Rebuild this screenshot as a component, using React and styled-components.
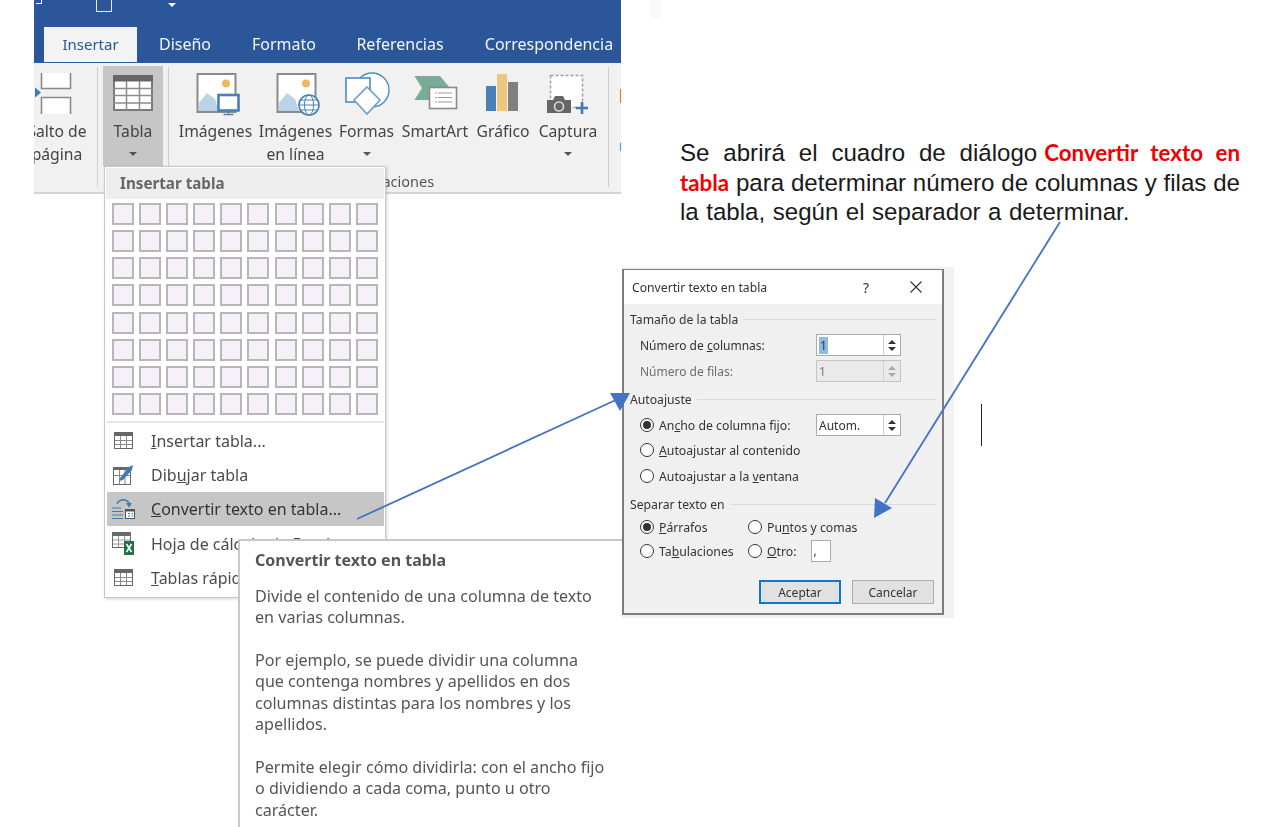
import React from "react";
import styled, { createGlobalStyle } from "styled-components";

const UI_FONT = `"Noto Sans", "Open Sans", sans-serif`;
const BLUE = "#2b579a";

const Global = createGlobalStyle`
  html, body { margin: 0; padding: 0; background: #fff; }
`;

const Canvas = styled.div`
  position: relative;
  width: 1275px;
  height: 827px;
  overflow: hidden;
  background: #fff;
  font-family: ${UI_FONT};
`;

/* ---------- ribbon ---------- */
const Ribbon = styled.div`
  position: absolute;
  left: 34px;
  top: 0;
  width: 587px;
  height: 194px;
  overflow: hidden;
  display: flex;
  flex-direction: column;
  filter: blur(0.35px);
`;

const TitleBar = styled.div`
  height: 62px;
  flex: none;
  background: ${BLUE};
  display: flex;
  flex-direction: column;
`;

const QuickAccess = styled.div`
  height: 27px;
  flex: none;
  display: flex;
  align-items: flex-start;
  padding-left: 2px;
`;

const QuickMark = styled.div`
  width: 5px;
  height: 3px;
  margin-right: 54px;
  border-bottom: 1px solid #fff;
  border-right: 1px solid #fff;
`;

const QuickBox = styled.div`
  width: 14px;
  height: 11px;
  margin-right: 56px;
  border: 1px solid #e8edf5;
  border-top: 0;
`;

const QuickCaret = styled.div`
  width: 0;
  height: 0;
  margin-top: 3px;
  border-left: 4px solid transparent;
  border-right: 4px solid transparent;
  border-top: 4px solid #fff;
`;

const TabRow = styled.div`
  height: 35px;
  flex: none;
  display: flex;
  padding-left: 10px;
`;

const Tab = styled.div`
  width: ${({ $w }) => $w}px;
  flex: none;
  display: flex;
  align-items: center;
  justify-content: center;
  font-size: ${({ $active }) => ($active ? 15 : 16)}px;
  white-space: nowrap;
  padding-bottom: 1px;
  color: ${({ $active }) => ($active ? BLUE : "#f2f5fa")};
  background: ${({ $active }) => ($active ? "#f3f3f3" : "transparent")};
`;

const RibbonBody = styled.div`
  flex: 1;
  display: flex;
  background: #f1f1f1;
  border-bottom: 2px solid #d4d4d4;
  border-top: 1px solid #2f5c9e;
  box-sizing: border-box;
  color: #444;
`;

const Sep = styled.div`
  width: 1px;
  flex: none;
  height: 120px;
  margin: 4px ${({ $mr }) => $mr ?? 5}px 0 ${({ $ml }) => $ml ?? 5}px;
  background: #cfcfcf;
`;

const RibbonButton = styled.div`
  width: ${({ $w }) => $w}px;
  height: 100px;
  margin-top: 3px;
  margin-left: ${({ $ml }) => $ml ?? 0}px;
  flex: none;
  display: flex;
  flex-direction: column;
  align-items: center;
  padding-top: 6px;
  box-sizing: border-box;
  background: ${({ $on }) => ($on ? "#c6c6c6" : "transparent")};
`;

const IconSlot = styled.div`
  width: 46px;
  height: 44px;
  margin-bottom: 3.5px;
  flex: none;
  svg { display: block; overflow: visible; }
`;

const ButtonLine = styled.div`
  height: 23px;
  line-height: 23px;
  font-size: 15.7px;
  white-space: nowrap;
  text-align: center;
  display: flex;
  align-items: center;
  justify-content: center;
`;

const Caret = styled.div`
  width: 0;
  height: 0;
  border-left: 4px solid transparent;
  border-right: 4px solid transparent;
  border-top: 4px solid #555;
`;

const Group = styled.div`
  display: flex;
  flex-direction: column;
`;

const GroupButtons = styled.div`
  display: flex;
  gap: 3px;
  padding-left: 3px;
`;

const GroupCaption = styled.div`
  text-align: center;
  margin-top: 5px;
  font-size: 14.5px;
  line-height: 20px;
  color: #555;
  padding-left: 6px;
`;

const EdgeMarks = styled.div`
  flex: none;
  width: 2px;
  margin-left: 6px;
  display: flex;
  flex-direction: column;
  padding-top: 26px;
  gap: 40px;
`;

const EdgeMark = styled.div`
  height: ${({ $h }) => $h}px;
  background: ${({ $c }) => $c};
`;

/* ---------- insert table menu ---------- */
const Menu = styled.div`
  position: absolute;
  left: 104px;
  top: 166px;
  width: 282px;
  height: 432px;
  box-sizing: border-box;
  background: #fff;
  border: 1px solid #c8c8c8;
  box-shadow: 1px 1px 3px rgba(0, 0, 0, 0.18);
  color: #444;
  filter: blur(0.35px);
`;

const MenuHeader = styled.div`
  height: 31px;
  margin: 1px 1px 0;
  padding-left: 14px;
  padding-bottom: 1px;
  box-sizing: border-box;
  display: flex;
  align-items: center;
  background: #eeeeee;
  font-size: 15.2px;
  font-weight: 700;
  color: #666;
`;

const CellGrid = styled.div`
  display: grid;
  grid-template-columns: repeat(10, 22px);
  grid-auto-rows: 22px;
  column-gap: 5.1px;
  row-gap: 5.14px;
  padding: 4px 0 0 7px;
`;

const Cell = styled.div`
  box-sizing: border-box;
  border: 2px solid #b8b7b8;
  background: #f6f1f8;
`;

const MenuRule = styled.div`
  height: 2px;
  margin: 6px 1px 1px 2px;
  background: #e6e6e6;
`;

const MenuRow = styled.div`
  height: 34.2px;
  margin: 0 1px 0 2px;
  box-sizing: border-box;
  display: flex;
  align-items: center;
  font-size: 16px;
  white-space: nowrap;
  background: ${({ $on }) => ($on ? "#c6c6c6" : "transparent")};
  color: ${({ $on }) => ($on ? "#333" : "#4b4b4b")};
`;

const MenuIcon = styled.div`
  width: 44px;
  flex: none;
  display: flex;
  padding-left: ${({ $pl }) => $pl ?? 5}px;
  box-sizing: border-box;
  svg { display: block; overflow: visible; }
`;

/* ---------- tooltip ---------- */
const Tip = styled.div`
  position: absolute;
  left: 238px;
  top: 539px;
  width: 384px;
  height: 300px;
  box-sizing: border-box;
  padding: 9px 10px 0 15px;
  background: #fff;
  border-left: 2px solid #c8c8c8;
  border-top: 2px solid #c8c8c8;
  color: #555;
  filter: blur(0.35px);
`;

const TipTitle = styled.div`
  font-size: 16px;
  line-height: 20px;
  font-weight: 700;
  margin-bottom: 15.5px;
`;

const TipText = styled.p`
  margin: 0 0 21.5px;
  font-size: 16.1px;
  line-height: 21.4px;
  white-space: nowrap;
`;

/* ---------- dialog ---------- */
const DialogHalo = styled.div`
  position: absolute;
  left: 622px;
  top: 267px;
  width: 332px;
  height: 351px;
  background: #f2f2f2;
`;

const Dialog = styled.div`
  position: absolute;
  left: 622px;
  top: 269px;
  width: 322px;
  height: 346px;
  box-sizing: border-box;
  border: 2px solid #7d7d7d;
  border-top-width: 1px;
  background: #f0f0f0;
  color: #333;
  font-size: 12px;
  filter: blur(0.3px);
`;

const DialogTitle = styled.div`
  height: 34px;
  background: #fff;
  display: flex;
  align-items: center;
  padding-left: 8px;
  font-size: 12.2px;
`;

const TitleText = styled.div`
  width: 231px;
  flex: none;
`;

const TitleHelp = styled.div`
  width: 47px;
  flex: none;
  font-size: 14px;
`;

const DialogBody = styled.div`
  padding: 0 6px 0 6px;
`;

const Legend = styled.div`
  height: 18px;
  margin-top: ${({ $mt }) => $mt}px;
  display: flex;
  align-items: center;
  gap: 5px;
  font-size: 12.2px;
  white-space: nowrap;
  &::after {
    content: "";
    flex: 1;
    height: 1px;
    background: #dcdcdc;
  }
`;

const FieldRow = styled.div`
  height: ${({ $h }) => $h ?? 26}px;
  display: flex;
  align-items: center;
  padding-left: 10px;
  white-space: nowrap;
  color: ${({ $off }) => ($off ? "#6d6d6d" : "inherit")};
`;

const FieldLabel = styled.div`
  width: ${({ $w }) => $w}px;
  flex: none;
`;

const Spin = styled.div`
  width: 85px;
  height: 22px;
  flex: none;
  box-sizing: border-box;
  border: 1px solid ${({ $off }) => ($off ? "#c4c4c4" : "#ababab")};
  background: ${({ $off }) => ($off ? "#eaeaea" : "#fff")};
  display: flex;
  align-items: center;
  padding-left: 2px;
  color: ${({ $off }) => ($off ? "#7a7a7a" : "inherit")};
`;

const Selected = styled.span`
  background: #8dbbe6;
  padding: 0 1px;
  line-height: 16px;
`;

const SpinValue = styled.div`
  flex: 1;
`;

const SpinArrows = styled.div`
  width: 17px;
  height: 100%;
  flex: none;
  box-sizing: border-box;
  border-left: 1px solid #d0d0d0;
  display: flex;
  flex-direction: column;
  align-items: center;
  justify-content: center;
  gap: 3px;
`;

const SpinUp = styled.div`
  width: 0;
  height: 0;
  border-left: 4px solid transparent;
  border-right: 4px solid transparent;
  border-bottom: 4px solid ${({ $off }) => ($off ? "#a8a8a8" : "#333")};
`;

const SpinDown = styled(SpinUp)`
  border-bottom: 0;
  border-top: 4px solid ${({ $off }) => ($off ? "#a8a8a8" : "#333")};
`;

const RadioLine = styled.label`
  width: ${({ $w }) => ($w ? `${$w}px` : "auto")};
  flex: none;
  display: flex;
  align-items: center;
  gap: 5px;
  font-size: 12.25px;
`;

const RadioDot = styled.span`
  width: 14px;
  height: 14px;
  flex: none;
  box-sizing: border-box;
  border-radius: 50%;
  border: 1px solid #333;
  background: #fff;
  display: flex;
  align-items: center;
  justify-content: center;
  &::after {
    content: "";
    width: 8px;
    height: 8px;
    border-radius: 50%;
    background: ${({ $on }) => ($on ? "#333" : "transparent")};
  }
`;

const OtherBox = styled.div`
  width: 20px;
  height: 22px;
  margin-left: 14px;
  box-sizing: border-box;
  border: 1px solid #ababab;
  background: #fff;
  padding-left: 2px;
  line-height: 20px;
`;

const ButtonBar = styled.div`
  display: flex;
  justify-content: flex-end;
  gap: 11px;
  margin-top: 19px;
  padding-right: 2px;
`;

const DlgButton = styled.div`
  width: 82px;
  height: 24px;
  box-sizing: border-box;
  display: flex;
  align-items: center;
  justify-content: center;
  background: #e1e1e1;
  border: ${({ $main }) => ($main ? "2px solid #0f78d4" : "1px solid #adadad")};
`;

/* ---------- slide note ---------- */
const Note = styled.div`
  position: absolute;
  left: 680px;
  top: 138px;
  width: 560px;
  font-family: "Liberation Sans", Arial, sans-serif;
  font-size: 24.1px;
  line-height: 29.6px;
  color: #1a1a1a;
`;

const NoteLine = styled.div`
  text-align: ${({ $last }) => ($last ? "left" : "justify")};
  text-align-last: ${({ $last }) => ($last ? "left" : "justify")};
  word-spacing: ${({ $last }) => ($last ? "0.8px" : "normal")};
  white-space: nowrap;
`;

const Red = styled.span`
  font-family: Lato, "Liberation Sans", sans-serif;
  font-weight: 700;
  font-size: 22.3px;
  margin-left: ${({ $ml }) => $ml ?? 0}px;
  color: #f00000;
`;

const Overlay = styled.svg`
  position: absolute;
  left: 0;
  top: 0;
  pointer-events: none;
`;

const Cursor = styled.div`
  position: absolute;
  left: 981px;
  top: 404px;
  width: 1px;
  height: 42px;
  background: #222;
`;

const Smudge = styled.div`
  position: absolute;
  left: 650px;
  top: 0;
  width: 11px;
  height: 18px;
  background: #fafafa;
`;

/* ---------- drawings ---------- */
const BigTableIcon = () => (
  <svg width="46" height="44" viewBox="0 0 46 44">
    <rect x="4" y="4" width="38" height="34" fill="#fff" stroke="#7a7a7a" strokeWidth="2" />
    <rect x="3" y="3" width="40" height="6.5" fill="#666" />
    <path d="M16.5 9V38M29.5 9V38M3 16.5H43M3 23.5H43M3 31H43" stroke="#8c8c8c" strokeWidth="1.5" />
  </svg>
);

const PictureFrame = () => (
  <>
    <rect x="4.5" y="2" width="38" height="38" fill="#fff" stroke="#8a8a8a" strokeWidth="2" />
    <circle cx="33" cy="11.5" r="4" fill="#eeb862" />
    <path d="M6 39V31L14 21L22 27L26 39Z" fill="#bcd2e8" />
  </>
);

const ImagesIcon = () => (
  <svg width="46" height="44" viewBox="0 0 46 44">
    <PictureFrame />
    <rect x="25.5" y="23" width="20" height="15.5" fill="#fff" stroke="#4a80b8" strokeWidth="2.6" />
    <path d="M30.5 42.5H40.5" stroke="#4a80b8" strokeWidth="1.5" />
    <path d="M35.5 39V42" stroke="#4a80b8" />
  </svg>
);

const OnlineImagesIcon = () => (
  <svg width="46" height="44" viewBox="0 0 46 44">
    <PictureFrame />
    <circle cx="36" cy="33" r="10" fill="#fff" stroke="#4a80b8" strokeWidth="1.6" />
    <ellipse cx="36" cy="33" rx="4.5" ry="10" fill="none" stroke="#4a80b8" />
    <path d="M26 33H46M27.5 28H44.5M27.5 38H44.5" stroke="#4a80b8" />
  </svg>
);

const ShapesIcon = () => (
  <svg width="46" height="44" viewBox="0 0 46 44">
    <circle cx="28" cy="18" r="17" fill="#fff" stroke="#4f8ac2" strokeWidth="1.4" />
    <rect x="2" y="6" width="24" height="24" fill="#fff" stroke="#4f8ac2" strokeWidth="1.6" />
    <path d="M23 15L36 28L23 42L10 28Z" fill="#fff" stroke="#6b9fd0" strokeWidth="1.6" />
  </svg>
);

const SmartArtIcon = () => (
  <svg width="46" height="44" viewBox="0 0 46 44">
    <path d="M2.5 4H28L38 16L26 28H2.5L10 16Z" fill="#78ab98" />
    <rect x="17.5" y="15.5" width="27" height="21" fill="#fff" stroke="#8a8a8a" strokeWidth="1.6" />
    {[21, 25.5, 30].map((y) => (
      <path key={y} d={`M23 ${y}H40`} stroke="#9a9a9a" strokeWidth="1.2" strokeDasharray="2 1 14" />
    ))}
  </svg>
);

const ChartIcon = () => (
  <svg width="46" height="44" viewBox="0 0 46 44">
    <rect x="6" y="14" width="10" height="25" fill="#4a7fb7" />
    <rect x="17" y="2" width="10" height="37" fill="#efc77c" />
    <rect x="28" y="10" width="10" height="29" fill="#808080" />
  </svg>
);

const CaptureIcon = () => (
  <svg width="46" height="44" viewBox="0 0 46 44">
    <rect x="5.5" y="3.5" width="32" height="32" fill="#fff" stroke="#a0a0a0" strokeWidth="1.5" strokeDasharray="3 2" />
    <path d="M2 28H8L10 24H18L20 28H26V41H2Z" fill="#666" />
    <circle cx="14" cy="34.5" r="4.5" fill="#666" stroke="#ddd" strokeWidth="1.6" />
    <path d="M37 30V42M31 36H43" stroke="#3f7ab7" strokeWidth="2.6" />
  </svg>
);

const BreakIcon = () => (
  <svg width="46" height="44" viewBox="0 0 46 44">
    <path d="M7.5 1V16.5H36.5V1" fill="#fff" stroke="#8a8a8a" strokeWidth="1.6" />
    <path d="M7.5 42V25.5H36.5V42" fill="#fff" stroke="#8a8a8a" strokeWidth="1.6" />
    <path d="M1 15.5L7 20.5L1 25.5Z" fill="#3f7ab7" />
  </svg>
);

const SmallTableIcon = () => (
  <svg width="19" height="17" viewBox="0 0 19 17">
    <rect x="0.5" y="0.5" width="18" height="16" fill="#fff" stroke="#666" />
    <rect x="0" y="0" width="19" height="4" fill="#666" />
    <path d="M6.5 4V16M12.5 4V16M1 8.5H18M1 12.5H18" stroke="#8a8a8a" />
  </svg>
);

const DrawTableIcon = () => (
  <svg width="21" height="22" viewBox="0 0 21 22">
    <rect x="0.5" y="3.5" width="17" height="17" fill="#fff" stroke="#6a6a6a" />
    <rect x="0" y="3" width="15" height="3" fill="#6a6a6a" />
    <path d="M6.5 6V20M12 6V20M1 11.5H17" stroke="#8a8a8a" />
    <path d="M7 14L16 3L20 1L19 6L10 16L6 17Z" fill="#3f7ab7" />
  </svg>
);

const ConvertIcon = () => (
  <svg width="23" height="20" viewBox="0 0 23 20">
    <path d="M0 9H9M0 12.5H11M0 16H11M0 19.5H11" stroke="#3f7ab7" strokeWidth="1.2" />
    <rect x="13.5" y="10.5" width="9" height="9" fill="#fff" stroke="#555" />
    <rect x="13" y="10" width="10" height="2.5" fill="#555" />
    <path d="M16 14.5H18M19.5 14.5H21M16 17H18M19.5 17H21" stroke="#3f7ab7" />
    <path d="M5 5C7 0 14 -1 17 4" fill="none" stroke="#3f7ab7" strokeWidth="1.4" />
    <path d="M14 4H20L17 8.5Z" fill="#3f7ab7" />
  </svg>
);

const SheetIcon = () => (
  <svg width="23" height="23" viewBox="0 0 23 23">
    <rect x="0.5" y="0.5" width="18" height="15" fill="#fff" stroke="#6a6a6a" />
    <rect x="0" y="0" width="19" height="4" fill="#6a6a6a" />
    <path d="M6.5 4V15M12.5 4V15M1 8H18M1 12H18" stroke="#9a9a9a" />
    <path d="M12 9H22V23H12Z" fill="#217346" />
    <path d="M14.5 12L19.5 20M19.5 12L14.5 20" stroke="#fff" strokeWidth="1.6" />
  </svg>
);

const CloseIcon = () => (
  <svg width="12" height="12" viewBox="0 0 12 12">
    <path d="M0.5 0.5L11.5 11.5M11.5 0.5L0.5 11.5" stroke="#333" strokeWidth="1.1" />
  </svg>
);

const Arrows = () => (
  <Overlay width="1275" height="827" viewBox="0 0 1275 827">
    <path d="M357 519L618 399" stroke="#4472c4" strokeWidth="1.8" />
    <path d="M630 393L610 393L620 411Z" fill="#4472c4" />
    <path d="M1060 222L885 503" stroke="#4472c4" strokeWidth="1.8" />
    <path d="M874 518L875 498L892 508Z" fill="#4472c4" />
  </Overlay>
);

const Spinner = ({ value, off }) => (
  <Spin $off={off}>
    <SpinValue>{value}</SpinValue>
    <SpinArrows>
      <SpinUp $off={off} />
      <SpinDown $off={off} />
    </SpinArrows>
  </Spin>
);

const Radio = ({ on, w, children }) => (
  <RadioLine $w={w}>
    <RadioDot $on={on} />
    <span>{children}</span>
  </RadioLine>
);

const cells = Array.from({ length: 80 }, (_, i) => i);

export default function App() {
  return (
    <Canvas>
      <Global />
      <Smudge />
      <Ribbon>
        <TitleBar>
          <QuickAccess>
            <QuickMark />
            <QuickBox />
            <QuickCaret />
          </QuickAccess>
          <TabRow>
            <Tab $w={93} $active>Insertar</Tab>
            <Tab $w={96}>Diseño</Tab>
            <Tab $w={102}>Formato</Tab>
            <Tab $w={130}>Referencias</Tab>
            <Tab $w={168}>Correspondencia</Tab>
          </TabRow>
        </TitleBar>
        <RibbonBody>
          <RibbonButton $w={62} $ml={-8}>
            <IconSlot><BreakIcon /></IconSlot>
            <ButtonLine>Salto de</ButtonLine>
            <ButtonLine>página</ButtonLine>
          </RibbonButton>
          <Sep $ml={9} />
          <RibbonButton $w={60} $on>
            <IconSlot><BigTableIcon /></IconSlot>
            <ButtonLine>Tabla</ButtonLine>
            <ButtonLine><Caret /></ButtonLine>
          </RibbonButton>
          <Sep />
          <Group>
            <GroupButtons>
              <RibbonButton $w={77}>
                <IconSlot><ImagesIcon /></IconSlot>
                <ButtonLine>Imágenes</ButtonLine>
              </RibbonButton>
              <RibbonButton $w={77}>
                <IconSlot><OnlineImagesIcon /></IconSlot>
                <ButtonLine>Imágenes</ButtonLine>
                <ButtonLine>en línea</ButtonLine>
              </RibbonButton>
              <RibbonButton $w={59}>
                <IconSlot><ShapesIcon /></IconSlot>
                <ButtonLine>Formas</ButtonLine>
                <ButtonLine><Caret /></ButtonLine>
              </RibbonButton>
              <RibbonButton $w={72}>
                <IconSlot><SmartArtIcon /></IconSlot>
                <ButtonLine>SmartArt</ButtonLine>
              </RibbonButton>
              <RibbonButton $w={58}>
                <IconSlot><ChartIcon /></IconSlot>
                <ButtonLine>Gráfico</ButtonLine>
              </RibbonButton>
              <RibbonButton $w={66}>
                <IconSlot><CaptureIcon /></IconSlot>
                <ButtonLine>Captura</ButtonLine>
                <ButtonLine><Caret /></ButtonLine>
              </RibbonButton>
            </GroupButtons>
            <GroupCaption>Ilustraciones</GroupCaption>
          </Group>
          <Sep $ml={7} $mr={5} />
          <EdgeMarks>
            <EdgeMark $h={14} $c="#e8703a" />
            <EdgeMark $h={8} $c="#3f9ad8" />
          </EdgeMarks>
        </RibbonBody>
      </Ribbon>

      <Menu>
        <MenuHeader>Insertar tabla</MenuHeader>
        <CellGrid>
          {cells.map((i) => (
            <Cell key={i} />
          ))}
        </CellGrid>
        <MenuRule />
        <MenuRow>
          <MenuIcon $pl={7}><SmallTableIcon /></MenuIcon>
          <span><u>I</u>nsertar tabla...</span>
        </MenuRow>
        <MenuRow>
          <MenuIcon $pl={6}><DrawTableIcon /></MenuIcon>
          <span>Dib<u>u</u>jar tabla</span>
        </MenuRow>
        <MenuRow $on>
          <MenuIcon><ConvertIcon /></MenuIcon>
          <span><u>C</u>onvertir texto en tabla...</span>
        </MenuRow>
        <MenuRow>
          <MenuIcon><SheetIcon /></MenuIcon>
          <span>Hoja de cálculo de Excel</span>
        </MenuRow>
        <MenuRow>
          <MenuIcon $pl={7}><SmallTableIcon /></MenuIcon>
          <span><u>T</u>ablas rápidas</span>
        </MenuRow>
      </Menu>

      <Tip>
        <TipTitle>Convertir texto en tabla</TipTitle>
        <TipText>
          Divide el contenido de una columna de texto
          <br />
          en varias columnas.
        </TipText>
        <TipText>
          Por ejemplo, se puede dividir una columna
          <br />
          que contenga nombres y apellidos en dos
          <br />
          columnas distintas para los nombres y los
          <br />
          apellidos.
        </TipText>
        <TipText>
          Permite elegir cómo dividirla: con el ancho fijo
          <br />
          o dividiendo a cada coma, punto u otro
          <br />
          carácter.
        </TipText>
      </Tip>

      <DialogHalo />
      <Dialog>
        <DialogTitle>
          <TitleText>Convertir texto en tabla</TitleText>
          <TitleHelp>?</TitleHelp>
          <CloseIcon />
        </DialogTitle>
        <DialogBody>
          <Legend $mt={6}>Tamaño de la tabla</Legend>
          <FieldRow $h={34}>
            <FieldLabel $w={176}>Número de <u>c</u>olumnas:</FieldLabel>
            <Spinner value={<Selected>1</Selected>} />
          </FieldRow>
          <FieldRow $off $h={18}>
            <FieldLabel $w={176}>Número de filas:</FieldLabel>
            <Spinner value="1" off />
          </FieldRow>
          <Legend $mt={10}>Autoajuste</Legend>
          <FieldRow $h={34}>
            <Radio on w={176}>An<u>c</u>ho de columna fijo:</Radio>
            <Spinner value="Autom." />
          </FieldRow>
          <FieldRow $h={16}>
            <Radio><u>A</u>utoajustar al contenido</Radio>
          </FieldRow>
          <FieldRow $h={36}>
            <Radio>Autoajustar a la <u>v</u>entana</Radio>
          </FieldRow>
          <Legend $mt={1}>Separar texto en</Legend>
          <FieldRow $h={28}>
            <Radio on w={108}><u>P</u>árrafos</Radio>
            <Radio>Pu<u>n</u>tos y comas</Radio>
          </FieldRow>
          <FieldRow $h={20}>
            <Radio w={108}>Ta<u>b</u>ulaciones</Radio>
            <Radio><u>O</u>tro:</Radio>
            <OtherBox>,</OtherBox>
          </FieldRow>
          <ButtonBar>
            <DlgButton $main>Aceptar</DlgButton>
            <DlgButton>Cancelar</DlgButton>
          </ButtonBar>
        </DialogBody>
      </Dialog>

      <Note>
        <NoteLine>
          Se abrirá el cuadro de diálogo<Red $ml={7}>Convertir texto en</Red>
        </NoteLine>
        <NoteLine>
          <Red>tabla</Red> para determinar número de columnas y filas de
        </NoteLine>
        <NoteLine $last>la tabla, según el separador a determinar.</NoteLine>
      </Note>

      <Cursor />
      <Arrows />
    </Canvas>
  );
}
